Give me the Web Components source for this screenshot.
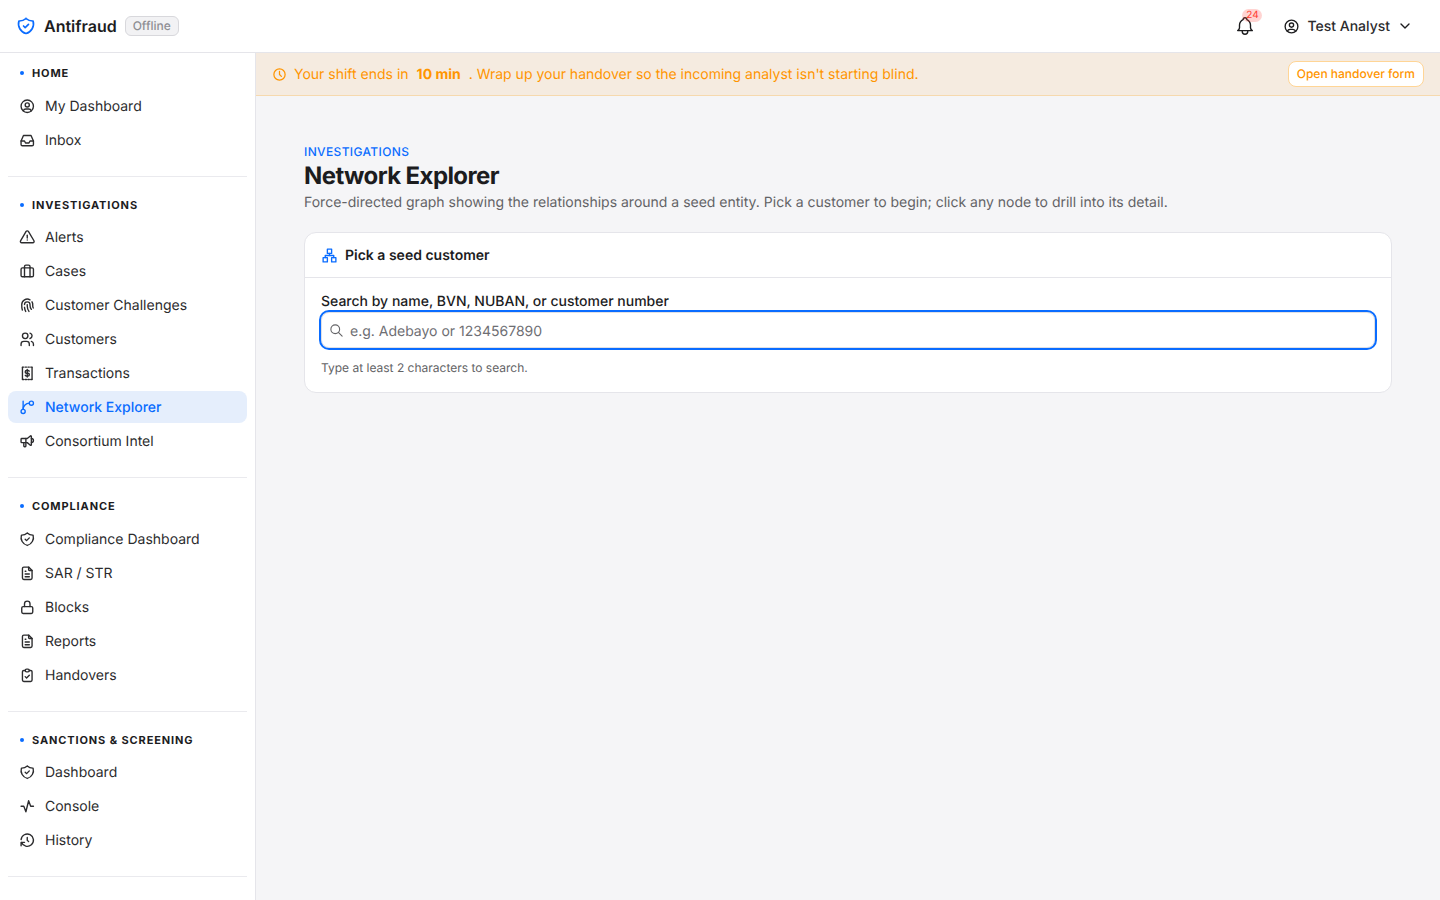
<!DOCTYPE html>
<html lang="en">
  <head>
    <meta charset="UTF-8" />
    <title>Network Explorer</title>
    <style>
      html, body { margin: 0; height: 100%; }
      body { font-family: Inter, "Liberation Sans", sans-serif; color: #1c1c1e; background: #f5f5f7; text-rendering: geometricPrecision; }
    </style>
  </head>
  <body>
    <app-shell>
      <app-header slot="header"></app-header>
      <side-nav slot="nav">
        <nav-section label="Home">
          <nav-item icon="userCircle">My Dashboard</nav-item>
          <nav-item icon="inbox">Inbox</nav-item>
        </nav-section>
        <nav-section label="Investigations">
          <nav-item icon="alert">Alerts</nav-item>
          <nav-item icon="briefcase">Cases</nav-item>
          <nav-item icon="fingerprint">Customer Challenges</nav-item>
          <nav-item icon="users">Customers</nav-item>
          <nav-item icon="receipt">Transactions</nav-item>
          <nav-item icon="branch" active>Network Explorer</nav-item>
          <nav-item icon="speakerphone">Consortium Intel</nav-item>
        </nav-section>
        <nav-section label="Compliance">
          <nav-item icon="shield">Compliance Dashboard</nav-item>
          <nav-item icon="file">SAR / STR</nav-item>
          <nav-item icon="lock">Blocks</nav-item>
          <nav-item icon="file">Reports</nav-item>
          <nav-item icon="clipboard">Handovers</nav-item>
        </nav-section>
        <nav-section label="Sanctions &amp; Screening">
          <nav-item icon="shield">Dashboard</nav-item>
          <nav-item icon="activity">Console</nav-item>
          <nav-item icon="history">History</nav-item>
        </nav-section>
      </side-nav>
      <shift-banner slot="banner"></shift-banner>
      <page-head
        eyebrow="Investigations"
        title="Network Explorer"
        text="Force-directed graph showing the relationships around a seed entity. Pick a customer to begin; click any node to drill into its detail."
      ></page-head>
      <seed-card></seed-card>
    </app-shell>

    <script>
      const ICONS = {
        shield: ["M9 12l2 2l4 -4", "M12 3a12 12 0 0 0 8.5 3a12 12 0 0 1 -8.5 15a12 12 0 0 1 -8.5 -15a12 12 0 0 0 8.5 -3"],
        userCircle: ["M3 12a9 9 0 1 0 18 0a9 9 0 1 0 -18 0", "M9 10a3 3 0 1 0 6 0a3 3 0 1 0 -6 0", "M6.168 18.849a4 4 0 0 1 3.832 -2.849h4a4 4 0 0 1 3.834 2.855"],
        inbox: ["M3 13h5l1.5 3h5l1.5 -3h5", "M6.5 5h11l3.5 8v5a2 2 0 0 1 -2 2h-14a2 2 0 0 1 -2 -2v-5z"],
        alert: ["M12 9v4", "M10.363 3.591l-8.106 13.534a1.914 1.914 0 0 0 1.636 2.871h16.214a1.914 1.914 0 0 0 1.636 -2.87l-8.106 -13.536a1.914 1.914 0 0 0 -3.274 0z", "M12 16h.01"],
        briefcase: ["M3 9a2 2 0 0 1 2 -2h14a2 2 0 0 1 2 2v9a2 2 0 0 1 -2 2h-14a2 2 0 0 1 -2 -2v-9z", "M8 7v-2a2 2 0 0 1 2 -2h4a2 2 0 0 1 2 2v2", "M8 7v13", "M16 7v13"],
        fingerprint: ["M18.9 7a8 8 0 0 1 1.1 5v1a6 6 0 0 0 .8 3", "M8 11a4 4 0 0 1 8 0v1a10 10 0 0 0 2 6", "M12 11v2a14 14 0 0 0 2.5 8", "M8 15a18 18 0 0 0 1.8 6", "M4.9 19a22 22 0 0 1 -.9 -7v-1a8 8 0 0 1 12 -6.95"],
        users: ["M5 7a4 4 0 1 0 8 0a4 4 0 1 0 -8 0", "M3 21v-2a4 4 0 0 1 4 -4h4a4 4 0 0 1 4 4v2", "M16 3.13a4 4 0 0 1 0 7.75", "M21 21v-2a4 4 0 0 0 -3 -3.85"],
        receipt: ["M5 3.5v17", "M19 3.5v17", "M5 3h2m2 0h2m2 0h2m2 0h2", "M5 21h2m2 0h2m2 0h2m2 0h2", "M14.8 9a2 2 0 0 0 -1.8 -1h-2a2 2 0 0 0 0 4h2a2 2 0 0 1 0 4h-2a2 2 0 0 1 -1.8 -1", "M12 6.5v11"],
        branch: ["M6 15v-12", "M15 6a9 9 0 0 0 -9 9", "M15 6a3 3 0 1 0 6 0a3 3 0 1 0 -6 0", "M3 18a3 3 0 1 0 6 0a3 3 0 1 0 -6 0"],
        speakerphone: ["M18 8a3 3 0 0 1 0 6", "M10 8v11a1 1 0 0 1 -1 1h-1a1 1 0 0 1 -1 -1v-5", "M12 8l4.524 -3.77a.9 .9 0 0 1 1.476 .692v12.156a.9 .9 0 0 1 -1.476 .692l-4.524 -3.77h-8a1 1 0 0 1 -1 -1v-4a1 1 0 0 1 1 -1h8"],
        file: ["M14 3v4a1 1 0 0 0 1 1h4", "M17 21h-10a2 2 0 0 1 -2 -2v-14a2 2 0 0 1 2 -2h7l5 5v11a2 2 0 0 1 -2 2z", "M9 9h1", "M9 13h6", "M9 17h6"],
        lock: ["M4 13a2 2 0 0 1 2 -2h12a2 2 0 0 1 2 2v6a2 2 0 0 1 -2 2h-12a2 2 0 0 1 -2 -2v-6z", "M8 11v-4a4 4 0 1 1 8 0v4"],
        clipboard: ["M9 5h-2a2 2 0 0 0 -2 2v12a2 2 0 0 0 2 2h10a2 2 0 0 0 2 -2v-12a2 2 0 0 0 -2 -2h-2", "M9 5a2 2 0 0 1 2 -2h2a2 2 0 0 1 2 2a2 2 0 0 1 -2 2h-2a2 2 0 0 1 -2 -2z", "M9 14l2 2l4 -4"],
        activity: ["M3 12h4l3 8l4 -16l3 8h4"],
        history: ["M12 8v4l2 2", "M3.05 11a9 9 0 1 1 .5 4m-.5 5v-5h5"],
        bell: ["M10 5a2 2 0 1 1 4 0a7 7 0 0 1 4 6v3a4 4 0 0 0 2 3h-16a4 4 0 0 0 2 -3v-3a7 7 0 0 1 4 -6", "M9 17v1a3 3 0 0 0 6 0v-1"],
        chevron: ["M6 9l6 6l6 -6"],
        clock: ["M3 12a9 9 0 1 0 18 0a9 9 0 0 0 -18 0", "M12 7v5l3 3"],
        search: ["M3 10a7 7 0 1 0 14 0a7 7 0 1 0 -14 0", "M21 21l-6 -6"],
        sitemap: ["M9 3h6v6h-6z", "M3 15h6v6h-6z", "M15 15h6v6h-6z", "M6 15v-3h12v3", "M12 9v3"],
      };

      class UiIcon extends HTMLElement {
        connectedCallback() {
          const size = this.getAttribute("size") || 16;
          const paths = ICONS[this.getAttribute("name")].map((d) => `<path d="${d}"/>`).join("");
          this.attachShadow({ mode: "open" }).innerHTML = `
            <style>
              :host { display: inline-flex; flex: none; }
              svg { display: block; }
            </style>
            <svg width="${size}" height="${size}" viewBox="0 0 24 24" fill="none" stroke="currentColor"
              stroke-width="${this.getAttribute("stroke") || 2}" stroke-linecap="round" stroke-linejoin="round">${paths}</svg>
          `;
        }
      }

      class AppShell extends HTMLElement {
        constructor() {
          super();
          this.attachShadow({ mode: "open" }).innerHTML = `
            <style>
              :host { display: flex; flex-direction: column; height: 100vh; overflow: hidden; }
              .body { flex: 1; display: flex; min-height: 0; }
              .right { flex: 1; min-width: 0; display: flex; flex-direction: column; }
              .page { padding: 48px; display: flex; flex-direction: column; gap: 19px; }
            </style>
            <slot name="header"></slot>
            <div class="body">
              <slot name="nav"></slot>
              <div class="right">
                <slot name="banner"></slot>
                <div class="page"><slot></slot></div>
              </div>
            </div>
          `;
        }
      }

      class AppHeader extends HTMLElement {
        constructor() {
          super();
          this.attachShadow({ mode: "open" }).innerHTML = `
            <style>
              :host { display: flex; flex: none; align-items: center; justify-content: space-between; height: 52px; padding: 0 27px 0 16px; background: #fff; border-bottom: 1px solid #e5e5ea; }
              .brand, .right, .user { display: flex; align-items: center; }
              .logo { color: #0a6cff; margin-right: 8px; }
              .name { font-size: 16px; font-weight: 600; color: #1c1c1e; margin-right: 8px; }
              .status { font-size: 12px; font-weight: 500; line-height: 16px; color: #8e8e93; background: #f2f2f4; border: 1px solid #d8d8dc; border-radius: 6px; padding: 1px 7px; }
              .bell { position: relative; display: flex; color: #1c1c1e; margin-right: 26.5px; }
              .count { position: absolute; left: 8px; top: -6px; width: 20px; height: 13px; border-radius: 7px; background: rgba(255, 59, 48, 0.22); color: #ff3b30; font-size: 10px; line-height: 13px; text-align: center; }
              .user { color: #1c1c1e; font-size: 14px; font-weight: 500; }
              .user .txt { margin: 0 7px 0 7.5px; color: #2c2c2e; }
            </style>
            <div class="brand">
              <ui-icon class="logo" name="shield" size="20"></ui-icon>
              <span class="name">Antifraud</span>
              <span class="status">Offline</span>
            </div>
            <div class="right">
              <div class="bell"><ui-icon name="bell" size="22" stroke="1.5"></ui-icon><span class="count">24</span></div>
              <div class="user">
                <ui-icon name="userCircle" size="17" stroke="1.9"></ui-icon>
                <span class="txt">Test Analyst</span>
                <ui-icon name="chevron" size="16"></ui-icon>
              </div>
            </div>
          `;
        }
      }

      class SideNav extends HTMLElement {
        constructor() {
          super();
          this.attachShadow({ mode: "open" }).innerHTML = `
            <style>
              :host { display: block; flex: none; box-sizing: border-box; width: 256px; height: 100%; overflow: hidden; background: #fff; border-right: 1px solid #e5e5ea; padding: 12.1px 8px 0; }
            </style>
            <slot></slot>
          `;
        }
      }

      class NavSection extends HTMLElement {
        connectedCallback() {
          this.attachShadow({ mode: "open" }).innerHTML = `
            <style>
              :host { display: block; padding-bottom: 19.8px; margin-bottom: 19.7px; border-bottom: 1px solid #eaeaee; }
              .label { display: flex; align-items: center; gap: 8px; height: 16.5px; margin: 0 0 8.5px 12px; font-size: 11px; font-weight: 700; letter-spacing: 0.08em; text-transform: uppercase; color: #1c1c1e; }
              .label::before { content: ""; width: 4px; height: 4px; border-radius: 50%; background: #0a6cff; }
              .items { display: flex; flex-direction: column; gap: 2px; }
            </style>
            <div class="label">${this.getAttribute("label").replace("&", "&amp;")}</div>
            <div class="items"><slot></slot></div>
          `;
        }
      }

      class NavItem extends HTMLElement {
        connectedCallback() {
          this.attachShadow({ mode: "open" }).innerHTML = `
            <style>
              :host { display: flex; align-items: center; gap: 9.25px; height: 32px; padding: 0 11.25px; border-radius: 8px; font-size: 14px; color: #2c2c2e; }
              :host([active]) { margin: -0.2px 0 0.2px; background: #e5eefc; color: #0a6cff; font-weight: 500; }
            </style>
            <ui-icon name="${this.getAttribute("icon")}" size="16.5"></ui-icon>
            <slot></slot>
          `;
        }
      }

      class ShiftBanner extends HTMLElement {
        constructor() {
          super();
          this.attachShadow({ mode: "open" }).innerHTML = `
            <style>
              :host { display: flex; flex: none; align-items: center; gap: 8px; height: 42px; padding: 0 16px 0 15.5px; background: #f5ebe0; border-bottom: 1px solid #f6d9ae; color: #ff9500; font-size: 14px; }
              ui-icon { margin-right: -0.5px; }
              b { font-weight: 700; }
              button { margin-left: auto; box-sizing: border-box; height: 26px; padding: 0 8px 2px; background: #fff; border: 1px solid #ffd596; border-radius: 8px; color: #ff9500; font: 500 12px Inter, "Liberation Sans", sans-serif; text-rendering: geometricPrecision; }
            </style>
            <ui-icon name="clock" size="15"></ui-icon>
            <span>Your shift ends in</span>
            <b>10 min</b>
            <span>. Wrap up your handover so the incoming analyst isn't starting blind.</span>
            <button type="button">Open handover form</button>
          `;
        }
      }

      class PageHead extends HTMLElement {
        connectedCallback() {
          this.attachShadow({ mode: "open" }).innerHTML = `
            <style>
              :host { display: block; }
              .eyebrow { font-size: 12px; font-weight: 500; line-height: 16px; letter-spacing: 0.03em; text-transform: uppercase; color: #0a6cff; }
              h1 { margin: 0; font-size: 24px; font-weight: 700; line-height: 32px; letter-spacing: -0.025em; color: #1c1c1e; }
              p { margin: 1px 0 0; font-size: 14px; line-height: 20px; color: #636366; }
            </style>
            <div class="eyebrow">${this.getAttribute("eyebrow")}</div>
            <h1>${this.getAttribute("title")}</h1>
            <p>${this.getAttribute("text")}</p>
          `;
        }
      }

      class SeedCard extends HTMLElement {
        constructor() {
          super();
          this.attachShadow({ mode: "open" }).innerHTML = `
            <style>
              :host { display: block; background: #fff; border: 1px solid #e5e5ea; border-radius: 12px; }
              .head { display: flex; align-items: center; gap: 7.5px; height: 44px; padding: 0 16px 0 15.5px; border-bottom: 1px solid #e5e5ea; font-size: 14px; font-weight: 600; color: #1c1c1e; }
              .head ui-icon { color: #0a6cff; }
              .body { padding: 16px; }
              label { display: block; height: 18px; font-size: 14px; font-weight: 500; line-height: 16px; color: #1c1c1e; }
              .field { display: flex; align-items: center; gap: 6.5px; box-sizing: border-box; height: 36px; padding: 0 6.5px; border: 1px solid #e0e0e4; border-radius: 8px; outline: 2px solid #0a6cff; color: #636366; }
              input { flex: 1; min-width: 0; border: 0; outline: 0; padding: 2px 0 0; background: none; font: 400 14px Inter, "Liberation Sans", sans-serif; color: #1c1c1e; text-rendering: geometricPrecision; }
              input::placeholder { color: #6e6e73; opacity: 1; }
              .hint { margin-top: 12px; font-size: 12px; line-height: 16px; color: #636366; }
            </style>
            <div class="head"><ui-icon name="sitemap" size="17" stroke="1.9"></ui-icon>Pick a seed customer</div>
            <div class="body">
              <label for="q">Search by name, BVN, NUBAN, or customer number</label>
              <div class="field">
                <ui-icon name="search" size="15" stroke="1.75"></ui-icon>
                <input id="q" type="text" placeholder="e.g. Adebayo or 1234567890" />
              </div>
              <div class="hint">Type at least 2 characters to search.</div>
            </div>
          `;
        }
      }

      customElements.define("ui-icon", UiIcon);
      customElements.define("app-shell", AppShell);
      customElements.define("app-header", AppHeader);
      customElements.define("side-nav", SideNav);
      customElements.define("nav-section", NavSection);
      customElements.define("nav-item", NavItem);
      customElements.define("shift-banner", ShiftBanner);
      customElements.define("page-head", PageHead);
      customElements.define("seed-card", SeedCard);
    </script>
  </body>
</html>
